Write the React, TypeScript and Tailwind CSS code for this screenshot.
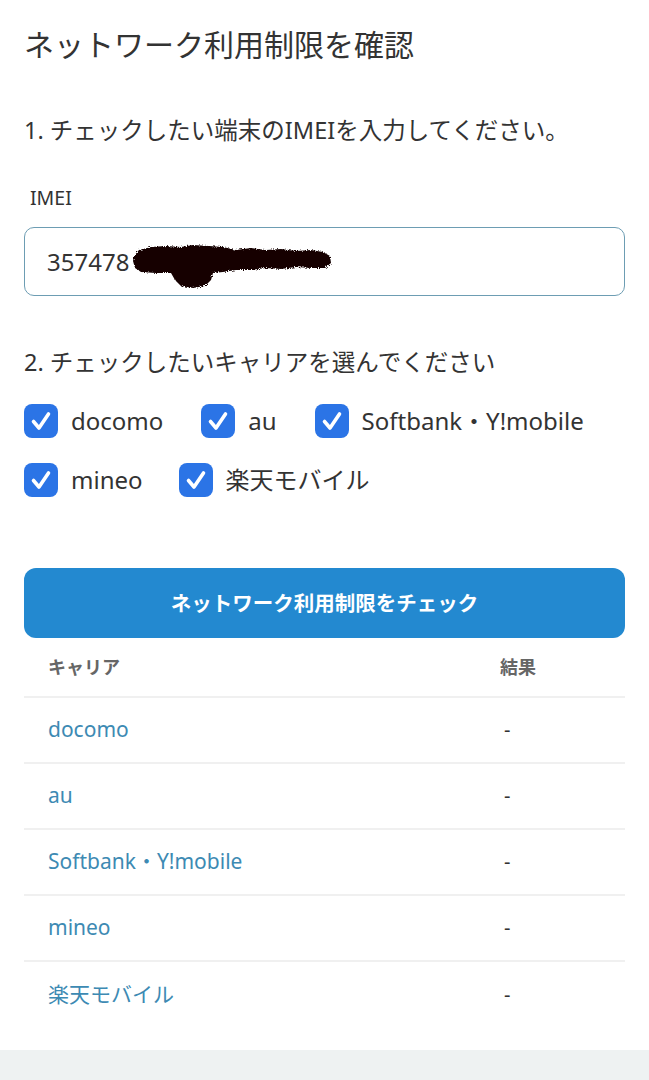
import React from "react";

const carriers = ["docomo", "au", "Softbank・Y!mobile", "mineo", "楽天モバイル"];

const CheckBox = () => (
  <span className="flex h-[34px] w-[34px] shrink-0 items-center justify-center rounded-[8px] bg-[#2b74e6]">
    <svg viewBox="0 0 34 34" className="h-[34px] w-[34px]">
      <path d="M9.5 17.5 L15 24 L24.5 10" fill="none" stroke="#fff" strokeWidth="3.6" strokeLinecap="round" strokeLinejoin="round" />
    </svg>
  </span>
);

const Option = ({ label }: { label: string }) => (
  <label className="flex items-center gap-[13px]">
    <CheckBox />
    <span className="text-[24px] leading-none text-[#333]">{label}</span>
  </label>
);

// redaction scribble over the IMEI digits
const Scribble = () => (
  <svg
    viewBox="0 0 204 46"
    className="pointer-events-none absolute left-[106px] top-[15px] h-[46px] w-[204px]"
  >
    <defs>
      <filter id="rough" x="-5%" y="-20%" width="110%" height="140%">
        <feTurbulence type="fractalNoise" baseFrequency="0.9" numOctaves="2" seed="3" />
        <feDisplacementMap in="SourceGraphic" scale="4" />
      </filter>
    </defs>
    <path
      filter="url(#rough)"
      d="M3 13 L8 7 L20 4 L35 3 L50 4 L62 2 L78 3 L92 4 L105 7 L120 5 L135 7 L150 6 L165 8 L180 7 L192 9 L199 13 L200 20 L194 25 L180 25 L165 24 L150 26 L135 25 L120 27 L105 27 L92 29 L82 30 L80 37 L74 43 L62 45 L50 43 L44 37 L40 30 L25 30 L10 29 L4 25 L2 18 Z"
      fill="#140606"
    />
  </svg>
);

export default function App() {
  return (
    <div className="min-h-screen bg-[#eef2f2] font-['Noto_Sans','Noto_Sans_CJK_JP',sans-serif] text-[#333]">
      <div className="bg-white px-6 pb-[22px] pt-[22px]">
        <h1 className="text-[30px] font-normal leading-[45px]">ネットワーク利用制限を確認</h1>

        <p className="mt-[46px] text-[23.5px] leading-[34px]">1. チェックしたい端末のIMEIを入力してください。</p>

        <div className="mt-[38px] pl-[6px] text-[19.5px] leading-[26px]">IMEI</div>
        <div className="relative mt-[16px] flex h-[69px] items-center rounded-[10px] border-[1.5px] border-[#6d9db3] pl-[22px] text-[24px]">
          357478
          <Scribble />
        </div>

        <p className="mt-[49px] text-[23.5px] leading-[34px]">2. チェックしたいキャリアを選んでください</p>

        <div className="mt-[25px] flex flex-col gap-[25px]">
          <div className="flex items-center gap-[38px]">
            <Option label="docomo" />
            <Option label="au" />
            <Option label="Softbank・Y!mobile" />
          </div>
          <div className="flex items-center gap-[36px]">
            <Option label="mineo" />
            <Option label="楽天モバイル" />
          </div>
        </div>

        <button className="mt-[71px] flex h-[70px] w-full items-center justify-center rounded-[12px] bg-[#2389d0] text-[20.5px] font-bold text-white">
          ネットワーク利用制限をチェック
        </button>

        <div className="grid grid-cols-[1fr_125px]">
          <div className="flex h-[60px] items-center border-b-2 border-[#f0f0f0] pl-6 text-[18px] font-semibold text-[#666]">キャリア</div>
          <div className="flex h-[60px] items-center border-b-2 border-[#f0f0f0] text-[18px] font-semibold text-[#666]">結果</div>
          {carriers.map((c, i) => (
            <React.Fragment key={c}>
              <div
                className={`flex h-[66px] items-center pl-6 text-[21px] text-[#3d8ab3] ${i < carriers.length - 1 ? "border-b-2 border-[#f0f0f0]" : ""}`}
              >
                {c}
              </div>
              <div
                className={`flex h-[66px] items-center pl-[4px] text-[20px] text-[#333] ${i < carriers.length - 1 ? "border-b-2 border-[#f0f0f0]" : ""}`}
              >
                -
              </div>
            </React.Fragment>
          ))}
        </div>
      </div>
    </div>
  );
}
